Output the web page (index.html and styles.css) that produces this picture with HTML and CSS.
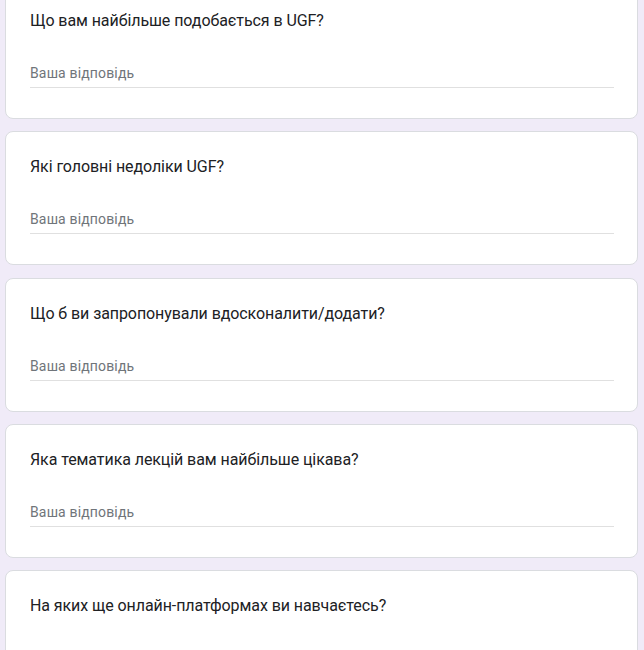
FILE: index.html
```html
<!DOCTYPE html>
<html lang="uk">
<head>
<meta charset="utf-8">
<title>UGF</title>
<link rel="stylesheet" href="styles.css">
</head>
<body>
<div class="page">
  <div class="card">
    <div class="question">Що вам найбільше подобається в UGF?</div>
    <div class="answer"><span class="placeholder">Ваша відповідь</span></div>
  </div>
  <div class="card">
    <div class="question">Які головні недоліки UGF?</div>
    <div class="answer"><span class="placeholder">Ваша відповідь</span></div>
  </div>
  <div class="card">
    <div class="question">Що б ви запропонували вдосконалити/додати?</div>
    <div class="answer"><span class="placeholder">Ваша відповідь</span></div>
  </div>
  <div class="card">
    <div class="question">Яка тематика лекцій вам найбільше цікава?</div>
    <div class="answer"><span class="placeholder">Ваша відповідь</span></div>
  </div>
  <div class="card">
    <div class="question">На яких ще онлайн-платформах ви навчаєтесь?</div>
    <div class="answer"><span class="placeholder">Ваша відповідь</span></div>
  </div>
</div>
</body>
</html>
```
FILE: styles.css
```css
html, body {
  margin: 0;
  padding: 0;
  background: #f0ebf8;
  overflow: hidden;
}
body {
  font-family: Roboto, "Liberation Sans", Arial, sans-serif;
  color: #202124;
}
.page {
  display: flex;
  flex-direction: column;
  gap: 12.33px;
  padding: 0 6px 0 5px;
  margin-top: -15px;
}
.card {
  background: #fff;
  border: 1px solid #dadce0;
  border-radius: 8px;
  padding: 23px 23px 30px 24px;
}
.question {
  font-size: 16px;
  line-height: 24px;
  letter-spacing: -0.08px;
  color: #202124;
}
.answer {
  margin-top: 24px;
  height: 30px;
  border-bottom: 1px solid #e0e0e0;
  display: flex;
  align-items: center;
}
.placeholder {
  font-size: 14px;
  color: #70757a;
  letter-spacing: 0.15px;
  padding-top: 2px;
}
```
